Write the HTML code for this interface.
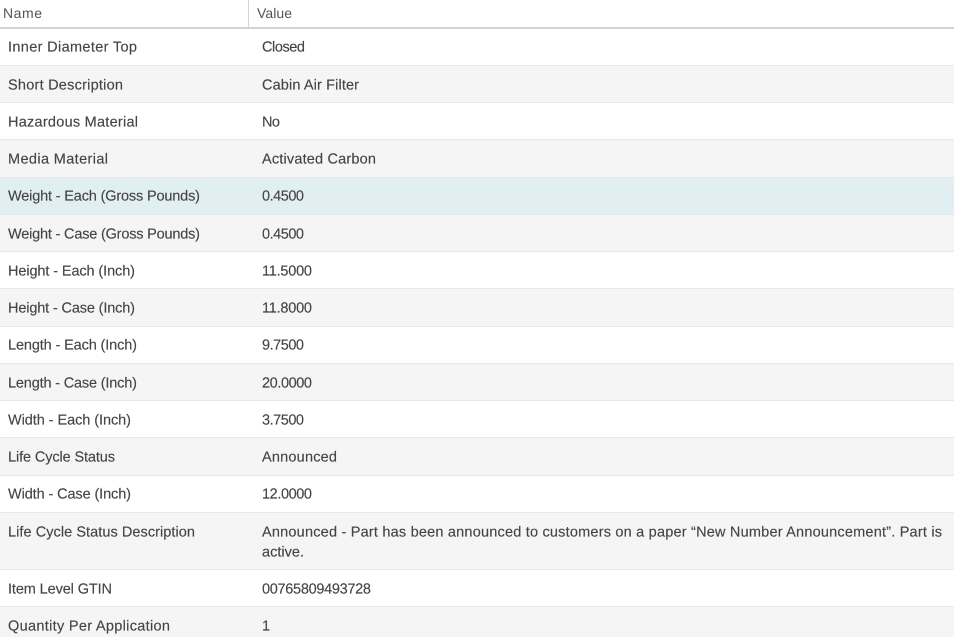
<!DOCTYPE html>
<html><head><meta charset="utf-8"><style>
html,body{margin:0;padding:0;background:#fff;width:954px;height:637px;overflow:hidden}
svg{display:block}
text{font-family:"Liberation Sans",sans-serif;font-size:14.5px;fill:#444;stroke:#444;stroke-width:.15px;text-rendering:geometricPrecision}
text.h{font-size:14px;fill:#555;stroke:none}
</style></head><body>
<svg width="954" height="637" viewBox="0 0 954 637" xmlns="http://www.w3.org/2000/svg">
<rect width="954" height="637" fill="#fff"/>
<g fill="#f5f5f5">
<rect y="66" width="954" height="37"/><rect y="140" width="954" height="38"/><rect y="215" width="954" height="37"/><rect y="289" width="954" height="38"/><rect y="364" width="954" height="37"/><rect y="438" width="954" height="38"/><rect y="513" width="954" height="57"/><rect y="607" width="954" height="30"/>
</g>
<rect y="178" width="954" height="37" fill="#e2eff2"/>
<g fill="#e8e8e8">
<rect y="65" width="954" height="1"/><rect y="102" width="954" height="1"/><rect y="139" width="954" height="1"/><rect y="177" width="954" height="1"/><rect y="214" width="954" height="1"/><rect y="251" width="954" height="1"/><rect y="288" width="954" height="1"/><rect y="326" width="954" height="1"/><rect y="363" width="954" height="1"/><rect y="400" width="954" height="1"/><rect y="437" width="954" height="1"/><rect y="475" width="954" height="1"/><rect y="512" width="954" height="1"/><rect y="569" width="954" height="1"/><rect y="606" width="954" height="1"/>
</g>
<rect y="27" width="954" height="2" fill="#d4d4d4"/>
<rect x="248" y="0" width="1" height="27" fill="#d4d4d4"/>
<text class="h" x="3" y="18" textLength="39" lengthAdjust="spacing">Name</text>
<text class="h" x="257" y="18" textLength="35" lengthAdjust="spacing">Value</text>
<g transform="translate(0,-0.4)">
<text x="8" y="52" textLength="129">Inner Diameter Top</text><text x="262" y="52" textLength="43">Closed</text>
<text x="8" y="90" textLength="115">Short Description</text><text x="262" y="90" textLength="97">Cabin Air Filter</text>
<text x="8" y="127" textLength="130">Hazardous Material</text><text x="262" y="127" textLength="18">No</text>
<text x="8" y="164" textLength="100">Media Material</text><text x="262" y="164" textLength="114">Activated Carbon</text>
<text x="8" y="201" textLength="192">Weight - Each (Gross Pounds)</text><text x="262" y="201" textLength="42">0.4500</text>
<text x="8" y="239" textLength="192">Weight - Case (Gross Pounds)</text><text x="262" y="239" textLength="42">0.4500</text>
<text x="8" y="276" textLength="127">Height - Each (Inch)</text><text x="262" y="276" textLength="50">11.5000</text>
<text x="8" y="313" textLength="127">Height - Case (Inch)</text><text x="262" y="313" textLength="50">11.8000</text>
<text x="8" y="350" textLength="129">Length - Each (Inch)</text><text x="262" y="350" textLength="42">9.7500</text>
<text x="8" y="388" textLength="129">Length - Case (Inch)</text><text x="262" y="388" textLength="50">20.0000</text>
<text x="8" y="425" textLength="123">Width - Each (Inch)</text><text x="262" y="425" textLength="42">3.7500</text>
<text x="8" y="462" textLength="107">Life Cycle Status</text><text x="262" y="462" textLength="75">Announced</text>
<text x="8" y="499" textLength="123">Width - Case (Inch)</text><text x="262" y="499" textLength="50">12.0000</text>
<text x="8" y="537" textLength="187">Life Cycle Status Description</text><text x="262" y="537" textLength="680">Announced - Part has been announced to customers on a paper “New Number Announcement”. Part is</text>
<text x="262" y="557" textLength="42">active.</text>
<text x="8" y="594" textLength="104">Item Level GTIN</text><text x="262" y="594" textLength="109">00765809493728</text>
<text x="8" y="631" textLength="162">Quantity Per Application</text><text x="262" y="631" textLength="7">1</text>
</g>
</svg>
</body></html>
